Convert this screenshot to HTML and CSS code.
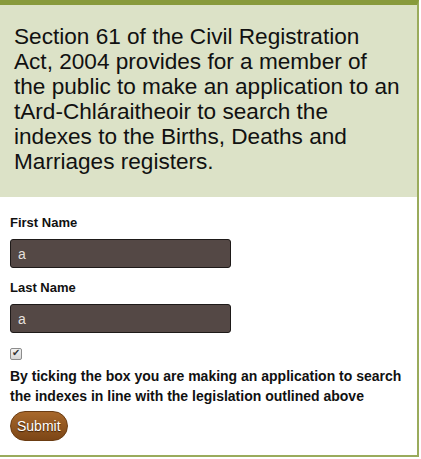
FILE: index.html
```html
<!DOCTYPE html>
<html lang="en">
<head>
  <meta charset="UTF-8">
  <title>Search Application</title>
  <link rel="stylesheet" href="styles.css">
</head>
<body>
  <div class="panel">
    <div class="intro">
      <p>Section 61 of the Civil Registration<br>Act, 2004 provides for a member of<br>the public to make an application to an<br>tArd-Chláraitheoir to search the<br>indexes to the Births, Deaths and<br>Marriages registers.</p>
    </div>
    <form class="apply-form">
      <label for="firstName">First Name</label>
      <input type="text" id="firstName" value="a">
      <label for="lastName">Last Name</label>
      <input type="text" id="lastName" value="a">
      <input type="checkbox" id="agree" checked>
      <p class="agree-text">By ticking the box you are making an application to search the indexes in line with the legislation outlined above</p>
      <button type="button" class="submit">Submit</button>
    </form>
  </div>
</body>
</html>
```

FILE: styles.css
```css
* {
  margin: 0;
  padding: 0;
  box-sizing: border-box;
}

body {
  background: #fff;
  font-family: "Liberation Sans", Arial, sans-serif;
  color: #111;
}

.panel {
  width: 419px;
  height: 457px;
  border-top: 5px solid #889a3c;
  border-right: 2px solid #9aab5c;
  border-bottom: 2px solid #9aab5c;
}

.intro {
  background: #dce2c7;
  padding: 19px 4px 19px 14px;
  height: 192px;
}

.intro p {
  font-size: 22.6px;
  line-height: 25px;
  color: #111;
  white-space: nowrap;
}

.apply-form {
  padding: 18px 10px 0 10px;
  display: flex;
  flex-direction: column;
  align-items: flex-start;
}

.apply-form label {
  font-weight: bold;
  font-size: 13px;
  line-height: 16px;
  margin-bottom: 8px;
}

.apply-form input[type="text"] {
  width: 221px;
  height: 29px;
  background: #544845;
  border: 1px solid #1e1a19;
  border-radius: 3px;
  color: #e6e0de;
  font-family: "Liberation Sans", Arial, sans-serif;
  font-size: 14px;
  padding: 0 7px;
  margin-bottom: 12px;
}

.apply-form input[type="checkbox"] {
  appearance: none;
  width: 12px;
  height: 12px;
  margin: 3px 0 6px 0;
  border: 1px solid #8c8c8c;
  border-radius: 2px;
  background: linear-gradient(#f2f2f2, #d6d6d6);
  position: relative;
}

.apply-form input[type="checkbox"]:checked::after {
  content: "\2714";
  position: absolute;
  left: 1px;
  top: -2px;
  font-size: 10px;
  color: #333;
}

.agree-text {
  font-weight: bold;
  font-size: 14px;
  line-height: 20px;
  margin-bottom: 5px;
}

.submit {
  background: linear-gradient(#a8682b, #7c4616);
  color: #fff;
  border: 1px solid #6b3c12;
  border-radius: 15px;
  font-family: "Liberation Sans", Arial, sans-serif;
  font-size: 14px;
  padding: 0 6px;
  height: 30px;
  text-shadow: 0 1px 1px #3c1f06;
  cursor: pointer;
}
```
